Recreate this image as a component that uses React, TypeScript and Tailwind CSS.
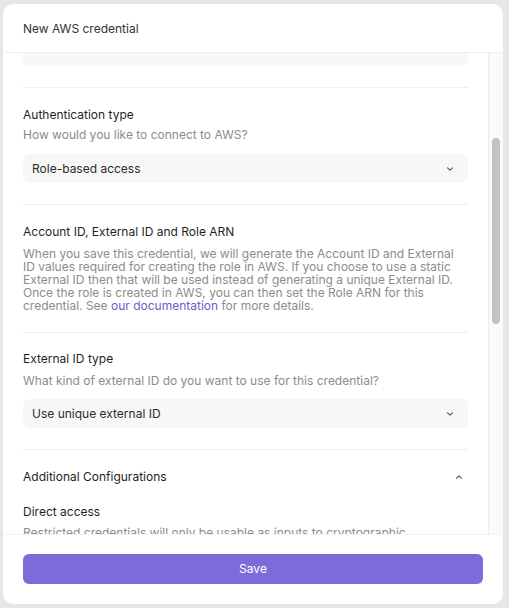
import React from 'react';

const font = { fontFamily: 'Inter, "Noto Sans", sans-serif' };

const ChevronDown = () => (
  <svg width="8" height="6" viewBox="0 0 8 6" fill="none" className="text-[#555]">
    <path d="M1.5 1.8 L4 4.2 L6.5 1.8" stroke="currentColor" strokeWidth="1.1" strokeLinecap="round" strokeLinejoin="round" />
  </svg>
);

const ChevronUp = () => (
  <svg width="8" height="6" viewBox="0 0 8 6" fill="none" className="text-[#555]">
    <path d="M1.5 4.2 L4 1.8 L6.5 4.2" stroke="currentColor" strokeWidth="1.1" strokeLinecap="round" strokeLinejoin="round" />
  </svg>
);

const Select = ({ value }: { value?: string }) => (
  <div className="flex h-[29px] items-center justify-between rounded-[7px] bg-[#f7f7f7] pl-[9px] pr-[14px] text-[12px] text-[#2b2b2b]">
    <span>{value}</span>
    {value && <ChevronDown />}
  </div>
);

const Divider = () => <div className="h-px bg-[#efefef]" />;

export default function App() {
  return (
    <div className="h-[608px] w-[509px] bg-[#e6e6e6] pl-[3px] pt-[4px]" style={font}>
      <div className="flex h-[600px] w-[500px] flex-col overflow-hidden rounded-[10px] bg-white">
        {/* Header */}
        <div className="flex h-[49px] shrink-0 items-center border-b border-[#f0f0f0] px-[20px] pt-[2px] text-[12px] text-[#333]">
          New AWS credential
        </div>

        {/* Scroll area */}
        <div className="flex h-[481px] shrink-0">
          <div className="flex-1 overflow-hidden px-[20px]">
            <div className="-mt-[16px]">
              <Select />
              <div className="h-[21px]" />
              <Divider />

              <div className="pt-[18px]">
                <div className="text-[12px] leading-[18px] text-[#1f1f1f]">Authentication type</div>
                <div className="mt-[2px] text-[12px] leading-[18px] text-[#8c8c8c]">How would you like to connect to AWS?</div>
                <div className="mt-[10px]">
                  <Select value="Role-based access" />
                </div>
              </div>
              <div className="h-[21px]" />
              <Divider />

              <div className="pt-[18px]">
                <div className="text-[12px] leading-[18px] text-[#1f1f1f]">Account ID, External ID and Role ARN</div>
                <p className="mt-[6px] whitespace-nowrap text-[12px] leading-[13px] text-[#8c8c8c]">
                  When you save this credential, we will generate the Account ID and External
                  <br />
                  ID values required for creating the role in AWS. If you choose to use a static
                  <br />
                  External ID then that will be used instead of generating a unique External ID.
                  <br />
                  Once the role is created in AWS, you can then set the Role ARN for this
                  <br />
                  credential. See <span className="text-[#6b5cc9]">our documentation</span> for more details.
                </p>
              </div>
              <div className="h-[20px]" />
              <Divider />

              <div className="pt-[17px]">
                <div className="text-[12px] leading-[18px] text-[#1f1f1f]">External ID type</div>
                <div className="mt-[4px] text-[12px] leading-[18px] text-[#8c8c8c]">
                  What kind of external ID do you want to use for this credential?
                </div>
                <div className="mt-[9px]">
                  <Select value="Use unique external ID" />
                </div>
              </div>
              <div className="h-[21px]" />
              <Divider />

              <div className="pt-[18px]">
                <div className="flex items-center justify-between pr-[5px] text-[12px] leading-[18px] text-[#1f1f1f]">
                  <span>Additional Configurations</span>
                  <ChevronUp />
                </div>
                <div className="mt-[17px] text-[12px] leading-[18px] text-[#1f1f1f]">Direct access</div>
                <div className="mt-[3px] text-[12px] leading-[18px] text-[#8c8c8c]">
                  Restricted credentials will only be usable as inputs to cryptographic operations.
                </div>
              </div>
            </div>
          </div>

          {/* Scrollbar */}
          <div className="w-[15px] shrink-0 border-l border-[#ececec] bg-[#fafafa] pl-[3px] pt-[85px]">
            <div className="h-[186px] w-[8px] rounded-full bg-[#c2c2c2]" />
          </div>
        </div>

        {/* Footer */}
        <div className="shrink-0 border-t border-[#f3f3f3] px-[20px] pt-[19px]">
          <button className="flex h-[30px] w-full items-center justify-center rounded-[6px] bg-[#7b6cd9] text-[12px] text-white">
            Save
          </button>
        </div>
      </div>
    </div>
  );
}
